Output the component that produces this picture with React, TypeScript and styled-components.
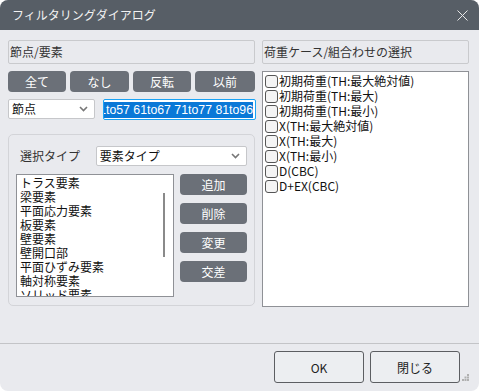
import styled, { createGlobalStyle } from "styled-components";

const GlobalStyle = createGlobalStyle`
    html, body {
        margin: 0;
        padding: 0;
        background: #ffffff;
    }
    * {
        box-sizing: border-box;
    }
`

const Dialog = styled.div`
    width: 479px;
    height: 391px;
    display: flex;
    flex-direction: column;
    background: #e9eaee;
    border-radius: 8px;
    overflow: hidden;
    font-family: "Noto Sans CJK JP", "Noto Sans", sans-serif;
    font-size: 12px;
    line-height: 1.2;
    color: #111;
`

const TitleBar = styled.div`
    height: 30px;
    flex-shrink: 0;
    display: flex;
    align-items: center;
    justify-content: space-between;
    padding: 0 11px 0 12px;
    background: #575e66;
    color: #f2f2f2;
    font-size: 12px;
`

const CloseIcon = styled.svg`
    width: 11px;
    height: 11px;
`

const Body = styled.div`
    display: flex;
    gap: 7px;
    padding: 10px 10px 0 8px;
`

const LeftColumn = styled.div`
    width: 247px;
    display: flex;
    flex-direction: column;
`

const RightColumn = styled.div`
    width: 207px;
    display: flex;
    flex-direction: column;
`

const Header = styled.div`
    height: 24px;
    display: flex;
    align-items: center;
    padding-left: 1px;
    border: 1px solid #c9cacd;
    border-radius: 2px;
    color: #333;
    font-size: 12px;
`

const ButtonRow = styled.div`
    display: flex;
    gap: 4px;
    margin-top: 7px;
`

const DarkButton = styled.button<{ $width?: number }>`
    height: 21px;
    width: ${p => (p.$width ? `${p.$width}px` : "auto")};
    flex: ${p => (p.$width ? "none" : "1")};
    border: none;
    border-radius: 4px;
    background: #6b7078;
    color: #ffffff;
    font-family: inherit;
    font-size: 12px;
    padding: 0;
    display: flex;
    align-items: center;
    justify-content: center;
`

const InputRow = styled.div`
    display: flex;
    gap: 8px;
    margin-top: 7px;
`

const Select = styled.div<{ $width: number }>`
    width: ${p => p.$width}px;
    height: 20px;
    display: flex;
    align-items: center;
    justify-content: space-between;
    padding: 0 6px 0 3px;
    background: #ffffff;
    border: 1px solid #c6c7ca;
    border-radius: 2px;
    font-size: 12px;
`

const Chevron = styled.svg`
    width: 9px;
    height: 6px;
`

const TextInput = styled.div`
    flex: 1;
    height: 21px;
    margin-right: -1px;
    display: flex;
    align-items: center;
    justify-content: flex-end;
    overflow: hidden;
    white-space: nowrap;
    padding: 0 2px;
    background: #ffffff;
    border: 1.5px solid #1aa3f5;
    border-radius: 2px;
    font-family: "Liberation Sans", Arial, sans-serif;
    font-size: 12.3px;
`

const Selected = styled.span`
    background: #0a78d7;
    color: #ffffff;
    line-height: 16px;
`

const GroupBox = styled.div`
    margin-top: 14px;
    height: 172px;
    display: flex;
    flex-direction: column;
    padding: 11px 7px 0 7px;
    border: 1px solid #d3d4d8;
    border-radius: 5px;
`

const TypeRow = styled.div`
    display: flex;
    align-items: center;
`

const TypeLabel = styled.div`
    width: 80px;
    padding-left: 4px;
    color: #333;
`

const ListRow = styled.div`
    display: flex;
    gap: 6px;
    margin-top: 8px;
`

const ListBox = styled.div`
    width: 160px;
    height: 123px;
    display: flex;
    background: #ffffff;
    border: 1px solid #8f9196;
    overflow: hidden;
`

const ListItems = styled.div`
    flex: 1;
    padding: 1px 0 0 3px;
    line-height: 14px;
    font-size: 12px;
`

const ScrollTrack = styled.div`
    width: 18px;
    padding: 18px 8px 0 8px;
`

const ScrollThumb = styled.div`
    width: 2px;
    height: 64px;
    background: #8a8a8a;
`

const SideButtons = styled.div`
    display: flex;
    flex-direction: column;
    gap: 8px;
`

const CaseList = styled.div`
    margin-top: 7px;
    height: 236px;
    padding: 2px 0 0 2px;
    background: #ffffff;
    border: 1px solid #8f9196;
`

const CaseRow = styled.label`
    display: flex;
    align-items: center;
    gap: 1px;
    height: 15px;
    font-size: 12px;
`

const CheckBox = styled.span`
    width: 13px;
    height: 13px;
    border: 1px solid #555;
    border-radius: 3px;
    background: #f4f4f4;
`

const Footer = styled.div`
    margin-top: auto;
    border-top: 1px solid #c3c4c7;
    height: 48px;
    display: flex;
    justify-content: flex-end;
    align-items: flex-start;
    gap: 6px;
    padding: 7px 19px 0 0;
    position: relative;
`

const LightButton = styled.button`
    width: 90px;
    height: 32px;
    background: #eceef1;
    border: 1px solid #5c5e62;
    border-radius: 3px;
    font-family: inherit;
    font-size: 12px;
    color: #222;
`

const Grip = styled.svg`
    position: absolute;
    right: 10px;
    bottom: 10px;
    width: 7px;
    height: 7px;
`

const elementTypes = [
    "トラス要素",
    "梁要素",
    "平面応力要素",
    "板要素",
    "壁要素",
    "壁開口部",
    "平面ひずみ要素",
    "軸対称要素",
    "ソリッド要素",
]

const loadCases = [
    "初期荷重(TH:最大絶対値)",
    "初期荷重(TH:最大)",
    "初期荷重(TH:最小)",
    "X(TH:最大絶対値)",
    "X(TH:最大)",
    "X(TH:最小)",
    "D(CBC)",
    "D+EX(CBC)",
]

const ChevronDown = () => (
    <Chevron viewBox="0 0 9 6">
        <path d="M1 1 L4.5 4.5 L8 1" fill="none" stroke="#777" strokeWidth="1.6" />
    </Chevron>
)

const App = () => {
    return (
        <>
            <GlobalStyle />
            <Dialog>
                <TitleBar>
                    <span>フィルタリングダイアログ</span>
                    <CloseIcon viewBox="0 0 11 11">
                        <path d="M0.5 0.5 L10.5 10.5 M10.5 0.5 L0.5 10.5" stroke="#e8e8e8" strokeWidth="1" />
                    </CloseIcon>
                </TitleBar>
                <Body>
                    <LeftColumn>
                        <Header>節点/要素</Header>
                        <ButtonRow>
                            <DarkButton $width={58}>全て</DarkButton>
                            <DarkButton $width={59}>なし</DarkButton>
                            <DarkButton $width={58}>反転</DarkButton>
                            <DarkButton>以前</DarkButton>
                        </ButtonRow>
                        <InputRow>
                            <Select $width={87}>
                                <span>節点</span>
                                <ChevronDown />
                            </Select>
                            <TextInput>
                                <Selected>1to7 11to17 21to27 31to37 41to47 51to57 61to67 71to77 81to96</Selected>
                            </TextInput>
                        </InputRow>
                        <GroupBox>
                            <TypeRow>
                                <TypeLabel>選択タイプ</TypeLabel>
                                <Select $width={152}>
                                    <span>要素タイプ</span>
                                    <ChevronDown />
                                </Select>
                            </TypeRow>
                            <ListRow>
                                <ListBox>
                                    <ListItems>
                                        {elementTypes.map(t => (
                                            <div key={t}>{t}</div>
                                        ))}
                                    </ListItems>
                                    <ScrollTrack>
                                        <ScrollThumb />
                                    </ScrollTrack>
                                </ListBox>
                                <SideButtons>
                                    <DarkButton $width={67}>追加</DarkButton>
                                    <DarkButton $width={67}>削除</DarkButton>
                                    <DarkButton $width={67}>変更</DarkButton>
                                    <DarkButton $width={67}>交差</DarkButton>
                                </SideButtons>
                            </ListRow>
                        </GroupBox>
                    </LeftColumn>
                    <RightColumn>
                        <Header>荷重ケース/組合わせの選択</Header>
                        <CaseList>
                            {loadCases.map(c => (
                                <CaseRow key={c}>
                                    <CheckBox />
                                    <span>{c}</span>
                                </CaseRow>
                            ))}
                        </CaseList>
                    </RightColumn>
                </Body>
                <Footer>
                    <LightButton>OK</LightButton>
                    <LightButton>閉じる</LightButton>
                    <Grip viewBox="0 0 7 7">
                        <rect x="5" y="0" width="2" height="2" fill="#b0b0b0" />
                        <rect x="2.5" y="2.5" width="2" height="2" fill="#b0b0b0" />
                        <rect x="5" y="2.5" width="2" height="2" fill="#b0b0b0" />
                        <rect x="0" y="5" width="2" height="2" fill="#b0b0b0" />
                        <rect x="2.5" y="5" width="2" height="2" fill="#b0b0b0" />
                        <rect x="5" y="5" width="2" height="2" fill="#b0b0b0" />
                    </Grip>
                </Footer>
            </Dialog>
        </>
    )
}

export default App;
